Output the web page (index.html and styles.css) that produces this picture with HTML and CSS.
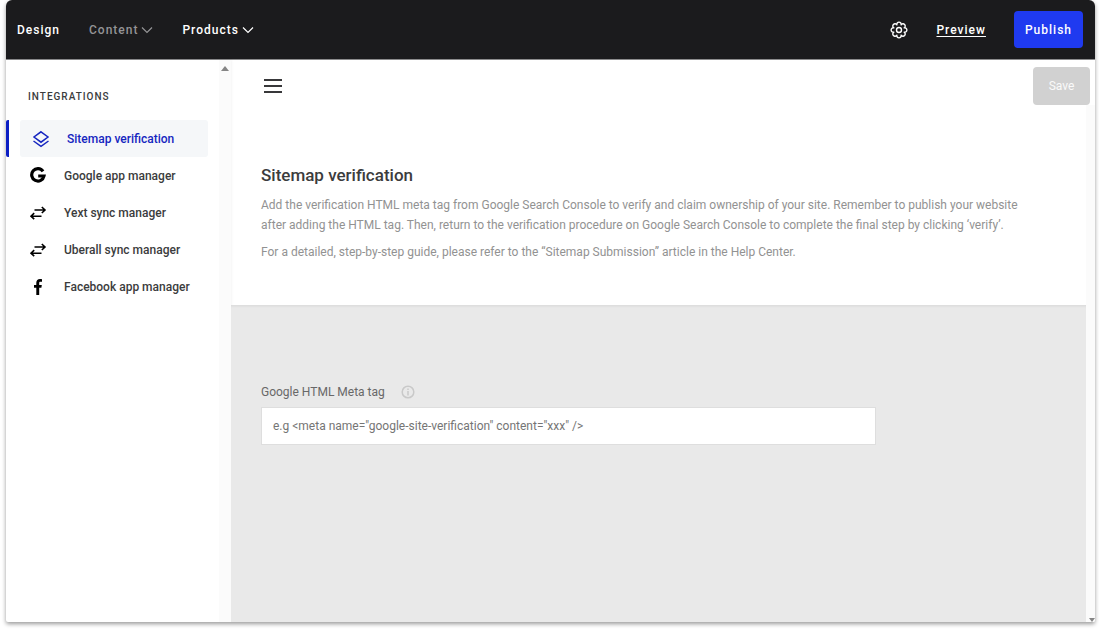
FILE: index.html
```html
<!DOCTYPE html>
<html lang="en">
<head>
<meta charset="utf-8">
<meta name="viewport" content="width=device-width, initial-scale=1">
<title>Sitemap verification</title>
<link rel="stylesheet" href="styles.css">
</head>
<body>
<div class="app">
  <header class="topbar">
    <nav class="topnav" aria-label="Main">
      <button class="nav-item" type="button">Design</button>
      <button class="nav-item muted" type="button">Content
        <svg width="12" height="8" viewBox="0 0 12 8" aria-hidden="true"><path d="M1 1.500 6 6.500l5-5"/></svg>
      </button>
      <button class="nav-item" type="button">Products
        <svg width="12" height="8" viewBox="0 0 12 8" aria-hidden="true"><path d="M1 1.500 6 6.500l5-5"/></svg>
      </button>
    </nav>
    <div class="actions">
      <button class="icon-button" type="button" aria-label="Settings">
        <svg width="18" height="18" viewBox="0 0 18 18" fill="none" stroke="#fff" stroke-width="1.400" stroke-linejoin="round" aria-hidden="true">
          <path d="M6.860 3.830A2.200 2.200 0 1 1 11.140 3.830A2.200 2.200 0 1 1 14.170 6.860A2.200 2.200 0 1 1 14.170 11.140A2.200 2.200 0 1 1 11.140 14.170A2.200 2.200 0 1 1 6.860 14.170A2.200 2.200 0 1 1 3.830 11.140A2.200 2.200 0 1 1 3.830 6.860A2.200 2.200 0 1 1 6.860 3.830Z"/>
          <circle cx="9" cy="9" r="2.500"/>
        </svg>
      </button>
      <a class="preview" href="#preview">Preview</a>
      <button class="publish" type="button">Publish</button>
    </div>
  </header>
  <div class="workspace">
    <aside class="sidebar">
      <nav class="menu" aria-labelledby="menu-title">
        <h2 class="menu-title" id="menu-title">INTEGRATIONS</h2>
        <ul class="menu-list">
          <li class="menu-row current">
            <a class="menu-link" href="#sitemap" aria-current="page">
              <svg width="18" height="18" viewBox="0 0 18 18" fill="none" stroke="currentColor" stroke-width="1.500" aria-hidden="true"><path d="M9 1.800 16 7l-7 5.200L2 7zM1.500 11 9 16.300l7.500-5.300"/></svg>
              <span>Sitemap verification</span>
            </a>
          </li>
          <li class="menu-row">
            <a class="menu-link" href="#google">
              <svg width="18" height="18" viewBox="0 0 18 18" fill="none" stroke="#000" stroke-width="3.200" aria-hidden="true"><path d="M14 4.300A6.200 6.200 0 1 0 15 9H9.200"/></svg>
              <span>Google app manager</span>
            </a>
          </li>
          <li class="menu-row">
            <a class="menu-link" href="#yext">
              <svg width="18" height="18" viewBox="0 0 18 18" fill="none" stroke="#000" stroke-width="1.600" aria-hidden="true"><path d="M5.500 6H16M12.800 3 16 6l-3.200 3M12.500 12.200H2M5.200 9.200 2 12.200l3.200 3"/></svg>
              <span>Yext sync manager</span>
            </a>
          </li>
          <li class="menu-row">
            <a class="menu-link" href="#uberall">
              <svg width="18" height="18" viewBox="0 0 18 18" fill="none" stroke="#000" stroke-width="1.600" aria-hidden="true"><path d="M5.500 6H16M12.800 3 16 6l-3.200 3M12.500 12.200H2M5.200 9.200 2 12.200l3.200 3"/></svg>
              <span>Uberall sync manager</span>
            </a>
          </li>
          <li class="menu-row">
            <a class="menu-link" href="#facebook">
              <svg width="18" height="18" viewBox="0 0 18 18" aria-hidden="true"><path d="M7.300 17V9.800H5V7h2.300V4.800C7.300 2.400 8.700 1 11 1c.8 0 1.600.1 2 .2v2.500h-1.400c-1.100 0-1.400.5-1.400 1.300v2h2.600l-.4 2.800h-2.200V17z"/></svg>
              <span>Facebook app manager</span>
            </a>
          </li>
        </ul>
      </nav>
      <div class="gutter">
        <svg width="8" height="5" viewBox="0 0 8 5" aria-hidden="true"><path d="m0 5 4-5 4 5z"/></svg>
      </div>
    </aside>
    <main class="main">
      <div class="toolbar">
        <button class="icon-button" type="button" aria-label="Toggle menu">
          <svg width="18" height="14" viewBox="0 0 18 14" fill="none" stroke="#38383a" stroke-width="2" aria-hidden="true"><path d="M0 1h18M0 7h18M0 13h18"/></svg>
        </button>
        <button class="save" type="button" disabled>Save</button>
      </div>
      <div class="scroller">
        <div class="content">
          <section class="intro">
            <h1 class="title">Sitemap verification</h1>
            <p>Add the verification HTML meta tag from Google Search Console to verify and claim ownership of your site. Remember to publish your website after adding the HTML tag. Then, return to the verification procedure on Google Search Console to complete the final step by clicking ‘verify’.</p>
            <p>For a detailed, step-by-step guide, please refer to the “Sitemap Submission” article in the Help Center.</p>
          </section>
          <section class="form">
            <div class="label-row">
              <label for="meta-tag">Google HTML Meta tag</label>
              <button class="icon-button" type="button" aria-label="More information">
                <svg width="14" height="14" viewBox="0 0 14 14" fill="none" stroke="#c9c9c9" stroke-width="1.500" aria-hidden="true"><circle cx="7" cy="7" r="5.800"/><path d="M7 3.500V5M7 6v4.500"/></svg>
              </button>
            </div>
            <input class="field" id="meta-tag" type="text" placeholder='e.g &lt;meta name="google-site-verification" content="xxx" /&gt;'>
          </section>
        </div>
        <div class="gutter end">
          <svg width="6" height="4" viewBox="0 0 6 4" aria-hidden="true"><path d="M0 0h6L3 4z"/></svg>
        </div>
      </div>
    </main>
  </div>
</div>
</body>
</html>
```

FILE: styles.css
```css
* { box-sizing: border-box; }

body {
  margin: 0;
  display: flex;
  flex-direction: column;
  min-height: 100vh;
  padding: 0 4px 8px 6px;
  background: #fff;
  color: #3b3c3d;
  font-family: Roboto, "Liberation Sans", sans-serif;
  font-size: 12px;
}

button {
  border: 0;
  padding: 0;
  background: none;
  font: inherit;
  color: inherit;
  cursor: pointer;
}

svg { display: block; flex: none; }

.app {
  flex: 1;
  display: flex;
  flex-direction: column;
  border-radius: 6px 6px 2px 2px;
  overflow: hidden;
  background: #fff;
  box-shadow: 0 2px 4px rgba(0, 0, 0, 0.4);
}

.topbar {
  display: flex;
  justify-content: space-between;
  align-items: center;
  height: 60px;
  padding: 0 12px 0 11px;
  border-bottom: 1px solid #8c8c8d;
  background: #1b1b1d;
  color: #fff;
}

.topnav { display: flex; gap: 29px; }

.nav-item {
  display: flex;
  align-items: center;
  gap: 3px;
  font-weight: 500;
  letter-spacing: 1px;
}

.nav-item svg { fill: none; stroke: currentColor; stroke-width: 1.2; }

.muted { color: #949496; }

.actions { display: flex; align-items: center; gap: 28px; }

.preview {
  color: #fff;
  font-weight: 500;
  letter-spacing: 1px;
  text-underline-offset: 2px;
}

.publish {
  height: 37px;
  padding: 0 11px;
  border-radius: 4px;
  background: #1f3af0;
  font-weight: 500;
  letter-spacing: 1px;
}

.workspace { flex: 1; display: flex; }

.sidebar {
  display: flex;
  flex: none;
  width: 225px;
  box-shadow: 0 0 3px rgba(0, 0, 0, 0.08);
}

.menu { flex: 1; padding-top: 30px; }

.menu-title {
  margin: 0 0 16px 22px;
  font-size: 10px;
  line-height: 14px;
  font-weight: 500;
  letter-spacing: 1px;
}

.menu-list {
  margin: 0;
  padding: 0;
  list-style: none;
}

.menu-row {
  padding: 0 11px;
  border-left: 3px solid transparent;
}

.menu-link {
  display: flex;
  align-items: center;
  gap: 17px;
  height: 37px;
  padding-left: 9px;
  border-radius: 3px;
  color: inherit;
  font-weight: 500;
  text-decoration: none;
}

.current { border-color: #0c1fc4; border-radius: 2px; color: #1626c0; }

.current .menu-link { padding-left: 12px; background: #f5f7f9; }

.gutter {
  flex: none;
  display: flex;
  flex-direction: column;
  align-items: center;
  width: 12px;
  padding-top: 6px;
  background: #fbfbfb;
}

.gutter svg { fill: #858585; }

.main { flex: 1; display: flex; flex-direction: column; min-width: 0; }

.toolbar {
  display: flex;
  justify-content: space-between;
  align-items: center;
  padding: 7px 5px 0 33px;
}

.save {
  width: 57px;
  height: 38px;
  border-radius: 4px;
  background: #d1d1d1;
  color: #fafafa;
  cursor: default;
}

.scroller { flex: 1; display: flex; }

.content { flex: 1; display: flex; flex-direction: column; min-width: 0; }

.intro { padding: 59px 30px 36px; color: #929292; line-height: 20px; }

.intro p { max-width: 784px; margin: 0 0 7px; }

.intro .title {
  margin: 0 0 9px;
  color: #3b3c3d;
  font-size: 17px;
  line-height: 22px;
  font-weight: 500;
}

.form {
  flex: 1;
  padding: 79px 30px 30px;
  background: #e9e9e9;
  box-shadow: inset 0 3px 3px -2px rgba(0, 0, 0, 0.08);
}

.label-row {
  display: flex;
  align-items: center;
  gap: 16px;
  margin-bottom: 7px;
  color: #686868;
  line-height: 16px;
}

.field {
  display: block;
  width: 100%;
  max-width: 615px;
  height: 38px;
  padding: 0 11px;
  border: 1px solid #dedede;
  background: #fff;
  color: #3b3c3d;
  font: inherit;
}

.field::placeholder { color: #757575; opacity: 1; }

.end { width: 9px; padding: 0; justify-content: flex-end; align-items: flex-end; }
```
